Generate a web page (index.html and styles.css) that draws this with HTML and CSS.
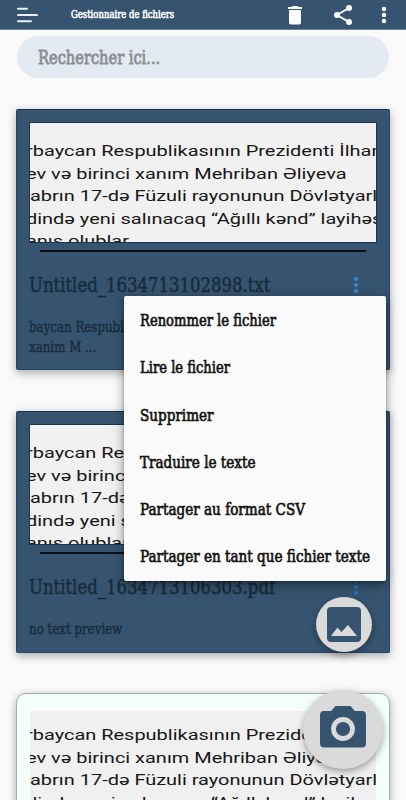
FILE: index.html
```html
<!DOCTYPE html>
<html lang="fr">
<head>
  <meta charset="UTF-8">
  <meta name="viewport" content="width=device-width, initial-scale=1.0">
  <title>Gestionnaire de fichiers</title>
  <link rel="stylesheet" href="styles.css">
</head>
<body>
  <header class="topbar">
    <svg class="menu-icon" width="22" height="16" viewBox="0 0 22 16"><path d="M1 1.800h9M1 8h19M1 14.200h13" stroke="#e9eef6" stroke-width="2" stroke-linecap="round"/></svg>
    <h1><span>Gestionnaire de fichiers</span></h1>
    <svg class="trash-icon" width="24" height="24" viewBox="0 0 24 24" fill="#fff"><path d="M6 19.400c0 1.100.9 2 2 2h8c1.100 0 2-.9 2-2V7H6v12.400zM19 4h-3.500l-1-1h-5l-1 1H5v2h14V4z"/></svg>
    <svg class="share-icon" width="24" height="24" viewBox="0 0 24 24"><path d="M18 5L6 12l12 7" fill="none" stroke="#fff" stroke-width="2"/><g fill="#fff"><circle cx="18" cy="5" r="3"/><circle cx="6" cy="12" r="3"/><circle cx="18" cy="19" r="3"/></g></svg>
    <svg class="more-icon" width="6" height="18" viewBox="0 0 6 18" fill="#fff"><circle cx="3" cy="3" r="2.200"/><circle cx="3" cy="9" r="2.200"/><circle cx="3" cy="15" r="2.200"/></svg>
  </header>

  <div class="search"><span>Rechercher ici...</span></div>

  <main class="files">
    <article class="card">
      <div class="preview">
        <p class="line">rbaycan Respublikasının Prezidenti İlham</p>
        <p class="line">ev və birinci xanım Mehriban Əliyeva</p>
        <p class="line whole">abrın 17-də Füzuli rayonunun Dövlətyarlı</p>
        <p class="line">dində yeni salınacaq “Ağıllı kənd” layihəsi</p>
        <p class="line">anış olublar.</p>
      </div>
      <hr>
      <div class="title">
        <h2><span>Untitled_1634713102898.txt</span></h2>
        <svg width="6" height="18" viewBox="0 0 6 18" fill="#3385d6"><circle cx="3" cy="3" r="2.100"/><circle cx="3" cy="9" r="2.100"/><circle cx="3" cy="15" r="2.100"/></svg>
      </div>
      <p class="excerpt"><span>baycan Respublikasinin<br>xanim M ...</span></p>
    </article>

    <article class="card short">
      <div class="preview">
        <p class="line">rbaycan Respublikasının Prezidenti İlham</p>
        <p class="line">ev və birinci xanım Mehriban Əliyeva</p>
        <p class="line whole">abrın 17-də Füzuli rayonunun Dövlətyarlı</p>
        <p class="line">dində yeni salınacaq “Ağıllı kənd” layihəsi</p>
        <p class="line">anış olublar.</p>
      </div>
      <hr>
      <div class="title">
        <h2><span>Untitled_1634713106303.pdf</span></h2>
        <svg width="6" height="18" viewBox="0 0 6 18" fill="#2475c9"><circle cx="3" cy="3" r="2.100"/><circle cx="3" cy="9" r="2.100"/><circle cx="3" cy="15" r="2.100"/></svg>
      </div>
      <p class="excerpt"><span>no text preview</span></p>
    </article>

    <article class="card light">
      <div class="preview">
        <p class="line">rbaycan Respublikasının Prezidenti İlham</p>
        <p class="line">ev və birinci xanım Mehriban Əliyeva</p>
        <p class="line whole">abrın 17-də Füzuli rayonunun Dövlətyarlı</p>
        <p class="line">dində yeni salınacaq “Ağıllı kənd” layihəsi</p>
      </div>
    </article>
  </main>

  <ul class="popup">
    <li class="narrow"><span>Renommer le fichier</span></li>
    <li class="narrow"><span>Lire le fichier</span></li>
    <li><span>Supprimer</span></li>
    <li><span>Traduire le texte</span></li>
    <li><span>Partager au format CSV</span></li>
    <li><span>Partager en tant que fichier texte</span></li>
  </ul>

  <button class="fab fab-gallery" aria-label="Galerie">
    <svg width="34" height="35" viewBox="0 0 34 35"><rect width="34" height="35" rx="4" fill="#36546f"/><path d="M4 29l6.500-8.500 4 4.500 6.500-7 9 11z" fill="#dadada"/></svg>
  </button>
  <button class="fab fab-camera" aria-label="Appareil photo">
    <svg width="46" height="42" viewBox="0 0 46 42"><path d="M15.500 0h15l4.300 5H42a4 4 0 0 1 4 4v28.500a4 4 0 0 1-4 4H4a4 4 0 0 1-4-4V9a4 4 0 0 1 4-4h7.200z" fill="#36546f"/><circle cx="23" cy="23" r="9.500" fill="none" stroke="#dadada" stroke-width="4.800"/></svg>
  </button>
</body>
</html>
```

FILE: styles.css
```css
:root {
  --primary: #36546f;
  --bg: #fafafa;
  --ink: #182b3d;
  --fab: #dadada;
}
* { box-sizing: border-box; }
html { overflow: hidden; }
body {
  margin: 0;
  height: 800px;
  overflow: hidden;
  position: relative;
  background: var(--bg);
  font-family: "DejaVu Serif Condensed", "DejaVu Serif", serif;
}
h1, h2, p, ul {
  margin: 0;
  padding: 0;
  font-weight: normal;
}
span {
  display: inline-block;
  white-space: nowrap;
  transform-origin: left center;
}
.topbar {
  display: flex;
  align-items: center;
  height: 30px;
  padding: 0 19px 0 17px;
  background: var(--primary);
  border-bottom: 1px solid #6f879c;
}
.topbar h1 {
  flex: 1;
  margin-left: 32px;
  color: #fff;
  font-size: 10.5px;
  line-height: 31px;
  -webkit-text-stroke: 0.5px #fff;
}
.topbar h1 span { transform: scaleX(0.9); }
.share-icon { margin: 0 26px 0 24px; }
.search {
  height: 42px;
  margin: 6px 17px 31px;
  padding-left: 21px;
  border-radius: 21px;
  background: #e4eaf2;
  color: #8b8e92;
  font-size: 19px;
  line-height: 42px;
  -webkit-text-stroke: 0.8px #8b8e92;
}
.search span { transform: scaleX(0.855); }
.files {
  display: flex;
  flex-direction: column;
  gap: 41px;
  padding: 0 16px;
}
.card {
  flex: none;
  height: 261px;
  padding: 13px;
  border: 1px solid #234767;
  border-top-color: #173451;
  border-radius: 2px;
  background: var(--primary);
  color: var(--ink);
  box-shadow: 0 4px 9px rgba(0,0,0,0.24), 0 0 10px rgba(0,0,0,0.1);
}
.card.short { height: 242px; }
.card.light {
  height: 150px;
  margin-top: -1px;
  padding-top: 17px;
  background: #f4fffa;
  border-color: #9fb0a8;
  border-radius: 10px;
}
.preview {
  height: 119px;
  padding-top: 17px;
  overflow: hidden;
  background: #f1f1f1;
  color: #161616;
  font-family: Roboto, sans-serif;
  font-size: 15px;
  box-shadow: 0 0 0 1px #173451;
}
/* the thumbnail is stretched sideways and starts in the middle of a letter */
.line {
  height: 22.6px;
  margin-left: -4px;
  line-height: 22.6px;
  white-space: nowrap;
  transform: scaleX(1.33);
  transform-origin: left center;
}
.line.whole { margin-left: 0; }
.light .preview {
  height: 130px;
  padding-top: 13px;
  background: #f0f0f0;
  box-shadow: none;
}
.card hr {
  height: 2px;
  margin: 8px 10px 0;
  border: 0;
  background: #0b0f14;
}
.title {
  display: flex;
  align-items: center;
  justify-content: space-between;
  height: 34px;
  margin-top: 16px;
  padding-right: 17px;
}
.title h2 {
  width: 243px;
  margin-left: -1px;
  font-size: 20px;
  -webkit-text-stroke: 0.5px var(--ink);
}
.title h2 span { transform: scaleX(0.918); }
.excerpt {
  margin: 16px 0 0 -1px;
  font-size: 14px;
  line-height: 19.5px;
  -webkit-text-stroke: 0.4px var(--ink);
}
.excerpt span { transform: scaleX(0.94); }
.popup {
  position: absolute;
  left: 124px;
  top: 296px;
  width: 262px;
  height: 285px;
  padding-top: 1px;
  list-style: none;
  background: var(--bg);
  border-radius: 2px;
  color: #101010;
  font-size: 16px;
  box-shadow: 0 4px 12px rgba(0,0,0,0.4), 0 1px 3px rgba(0,0,0,0.3);
}
.popup li {
  height: 47.3px;
  padding-left: 16px;
  line-height: 48px;
  -webkit-text-stroke: 0.6px #101010;
}
.popup span { transform: scaleX(0.942); }
.popup .narrow span { transform: scaleX(0.912); }
.fab {
  position: absolute;
  display: flex;
  align-items: center;
  justify-content: center;
  padding: 0;
  border: 0;
  border-radius: 50%;
  background: var(--fab);
  box-shadow: 0 3px 7px rgba(0,0,0,0.35);
}
.fab-gallery {
  left: 316px;
  top: 597px;
  width: 56px;
  height: 55px;
}
.fab-camera {
  left: 303px;
  top: 690px;
  width: 80px;
  height: 79px;
  padding-bottom: 6px;
}
```
